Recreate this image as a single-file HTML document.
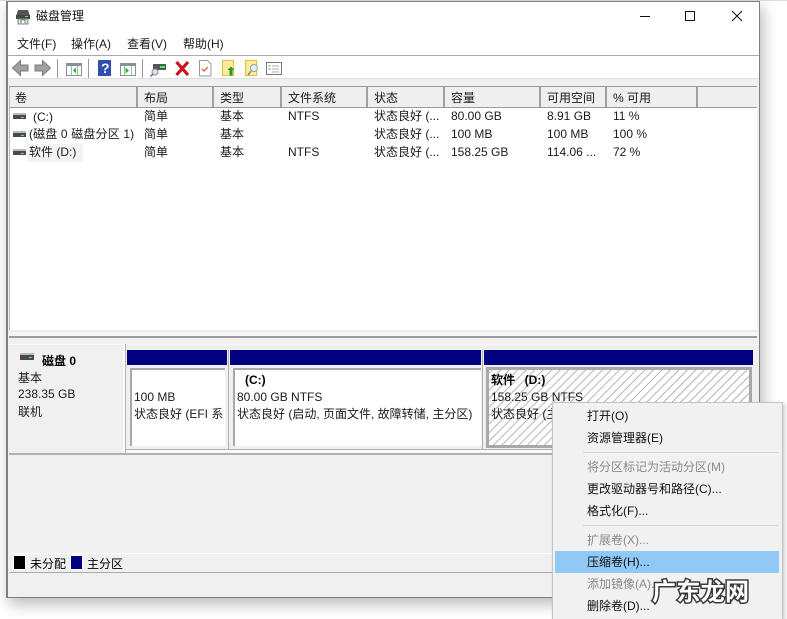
<!DOCTYPE html>
<html><head><meta charset="utf-8"><style>
html,body{margin:0;padding:0}
body{width:787px;height:619px;overflow:hidden;background:#fff;position:relative;font-family:"Liberation Sans","Noto Sans CJK SC",sans-serif;font-size:12px;color:#1a1a1a}
div,svg{position:absolute}
.t{white-space:nowrap;line-height:16px}
.h{top:87px;height:20px;background:#efefef;border-right:2px solid #a0a0a0;box-sizing:border-box}
.m{white-space:nowrap;line-height:16px;left:587px;color:#111}
.g{color:#8a8a8a}
</style></head><body>
<div style="left:0;top:0;width:787px;height:1px;background:#ddd"></div>
<div style="left:6px;top:1px;width:754px;height:597px;box-sizing:border-box;border:1px solid #808080;border-left-width:2px;background:#f0f0f0;box-shadow:3px 6px 14px rgba(0,0,0,.28)"></div>
<div style="left:8px;top:2px;width:751px;height:53px;background:#fff"></div>
<div style="left:8px;top:55px;width:751px;height:1px;background:#aaa"></div>
<div style="left:8px;top:56px;width:751px;height:22px;background:#fff"></div>
<div style="left:8px;top:78px;width:751px;height:1px;background:#ddd"></div>

<svg style="left:15px;top:9px" width="16" height="16" viewBox="0 0 16 16"><path d="M3 1h10l2 6H1z" fill="#555"/><rect x="1" y="6" width="14" height="4" fill="#444"/><rect x="10" y="7" width="3" height="1" fill="#3f3"/><path d="M3 10h10v5H3z" fill="#ddd" stroke="#888"/><rect x="6" y="11" width="4" height="4" fill="#fff" stroke="#888"/></svg>
<div class="t" style="left:36px;top:8px;font-size:12px;color:#111">磁盘管理</div>

<svg style="left:640px;top:9px" width="110" height="16" viewBox="0 0 110 16"><path d="M0 7.500h10" stroke="#111" fill="none"/><rect x="45.500" y="2.500" width="9" height="9" fill="none" stroke="#111"/><path d="M92 2l10 10M102 2l-10 10" stroke="#111" fill="none"/></svg>

<div class="t" style="left:17px;top:36px">文件(F)</div>
<div class="t" style="left:71px;top:36px">操作(A)</div>
<div class="t" style="left:127px;top:36px">查看(V)</div>
<div class="t" style="left:183px;top:36px">帮助(H)</div>

<svg style="left:0;top:56px" width="300" height="24" viewBox="0 0 300 24">
<path d="M12.500 12l8-7.500v4.500h7.500v6h-7.500v4.500z" fill="#a0a0a0" stroke="#7c7c7c"/>
<path d="M50.500 12l-8-7.500v4.500h-7.500v6h7.500v4.500z" fill="#a0a0a0" stroke="#7c7c7c"/>
<rect x="57" y="3" width="1" height="19" fill="#9a9a9a"/>
<rect x="66.500" y="7.500" width="15" height="12" fill="#fff" stroke="#8a9097"/><rect x="66" y="7" width="16" height="3" fill="#8a9097"/><path d="M71.500 10v9M77.500 10v9" stroke="#aab4bc"/><path d="M73 14.500l3-3v6z" fill="#2b2"/>
<rect x="88" y="3" width="1" height="19" fill="#9a9a9a"/>
<rect x="98" y="4" width="13" height="16" fill="#2c4fb0"/><text x="101" y="17" font-size="14" font-weight="bold" fill="#fff" font-family="Liberation Sans">?</text>
<rect x="120.500" y="7.500" width="15" height="12" fill="#fff" stroke="#8a9097"/><rect x="120" y="7" width="16" height="3" fill="#8a9097"/><path d="M124.500 10v9M131.500 10v9" stroke="#aab4bc"/><path d="M125.500 11.500l3.500 3-3.500 3z" fill="#2b2"/>
<rect x="142" y="3" width="1" height="19" fill="#9a9a9a"/>
<rect x="153" y="8" width="13" height="6" fill="#555"/><rect x="160" y="10" width="5" height="2" fill="#3f3"/><circle cx="155" cy="16" r="3" fill="#dde4ee" stroke="#889"/><path d="M153 18l-2.500 2.500" stroke="#666" stroke-width="1.500"/>
<path d="M176.500 6l11.500 13M188 6l-11.500 13" stroke="#c8141e" stroke-width="3.200"/>
<path d="M199.500 4.500h8l3.500 3.500v12h-11.500z" fill="#fff" stroke="#999"/><path d="M202 13l2 2 4-4" stroke="#e8622a" fill="none" stroke-width="1.300"/>
<rect x="222.500" y="4.500" width="11" height="15" fill="#fdeb9a" stroke="#e2bf3e"/><path d="M231 10.500l3.500 3.500h-2v5.500h-3v-5.500h-2z" fill="#1aa01a"/>
<rect x="245.500" y="4.500" width="11" height="15" fill="#fdeb9a" stroke="#e2bf3e"/><circle cx="254" cy="12" r="3.500" fill="#e4eef4" stroke="#8aa"/><path d="M251 15l-3 4" stroke="#888" stroke-width="1.500"/>
<rect x="266.500" y="6.500" width="15" height="12" fill="#fff" stroke="#778"/><path d="M272 10h7M272 13h7M272 16h7" stroke="#aab"/><path d="M268.500 10h2M268.500 13h2" stroke="#48c"/>
</svg>

<!-- list -->
<div style="left:9px;top:86px;width:748px;height:244px;background:#fff;border-top:1px solid #999;border-left:1px solid #bbb;box-sizing:border-box"></div>
<div class="h" style="left:10px;width:128px"></div>
<div class="h" style="left:138px;width:76px"></div>
<div class="h" style="left:214px;width:68px"></div>
<div class="h" style="left:282px;width:86px"></div>
<div class="h" style="left:368px;width:77px"></div>
<div class="h" style="left:445px;width:96px"></div>
<div class="h" style="left:541px;width:66px"></div>
<div class="h" style="left:607px;width:91px"></div>
<div class="h" style="left:698px;width:59px;border-right:0"></div>
<div style="left:10px;top:107px;width:747px;height:1px;background:#9a9a9a"></div>

<div class="t" style="left:15px;top:90px">卷</div>
<div class="t" style="left:144px;top:90px">布局</div>
<div class="t" style="left:220px;top:90px">类型</div>
<div class="t" style="left:288px;top:90px">文件系统</div>
<div class="t" style="left:374px;top:90px">状态</div>
<div class="t" style="left:451px;top:90px">容量</div>
<div class="t" style="left:547px;top:90px">可用空间</div>
<div class="t" style="left:613px;top:90px">% 可用</div>

<div style="left:27px;top:144px;width:56px;height:18px;background:#f3f3f3"></div>
<svg style="left:12px;top:112px" width="16" height="48" viewBox="0 0 16 48"><rect x="1" y="1" width="13" height="2" fill="#bbb"/><rect x="1" y="3" width="13" height="4" fill="#4a4a4a"/><rect x="9" y="5" width="3" height="1" fill="#4f4"/><rect x="1" y="19" width="13" height="2" fill="#bbb"/><rect x="1" y="21" width="13" height="4" fill="#4a4a4a"/><rect x="9" y="23" width="3" height="1" fill="#4f4"/><rect x="1" y="37" width="13" height="2" fill="#bbb"/><rect x="1" y="39" width="13" height="4" fill="#4a4a4a"/><rect x="9" y="41" width="3" height="1" fill="#4f4"/></svg>

<div class="t" style="left:33px;top:109px">(C:)</div>
<div class="t" style="left:29px;top:126px;letter-spacing:.15px">(磁盘 0 磁盘分区 1)</div>
<div class="t" style="left:29px;top:144px">软件 (D:)</div>

<div class="t" style="left:144px;top:108px">简单</div><div class="t" style="left:144px;top:126px">简单</div><div class="t" style="left:144px;top:144px">简单</div>
<div class="t" style="left:220px;top:108px">基本</div><div class="t" style="left:220px;top:126px">基本</div><div class="t" style="left:220px;top:144px">基本</div>
<div class="t" style="left:288px;top:108px">NTFS</div><div class="t" style="left:288px;top:144px">NTFS</div>
<div class="t" style="left:374px;top:108px">状态良好 (...</div><div class="t" style="left:374px;top:126px">状态良好 (...</div><div class="t" style="left:374px;top:144px">状态良好 (...</div>
<div class="t" style="left:451px;top:108px">80.00 GB</div><div class="t" style="left:451px;top:126px">100 MB</div><div class="t" style="left:451px;top:144px">158.25 GB</div>
<div class="t" style="left:547px;top:108px">8.91 GB</div><div class="t" style="left:547px;top:126px">100 MB</div><div class="t" style="left:547px;top:144px">114.06 ...</div>
<div class="t" style="left:613px;top:108px">11 %</div><div class="t" style="left:613px;top:126px">100 %</div><div class="t" style="left:613px;top:144px">72 %</div>

<!-- splitter -->
<div style="left:9px;top:330px;width:748px;height:2px;background:#ececec"></div>
<div style="left:9px;top:332px;width:748px;height:4px;background:#f6f6f6"></div>
<div style="left:9px;top:336px;width:748px;height:2px;background:#9c9c9c"></div>

<!-- disk panel -->
<div style="left:9px;top:344px;width:749px;height:1px;background:#fafafa"></div>
<div style="left:123px;top:344px;width:2px;height:110px;background:#fafafa"></div>
<div style="left:125px;top:344px;width:1px;height:110px;background:#b4b4b4"></div>
<div style="left:126px;top:449px;width:632px;height:1px;background:#b0b0b0"></div>
<div style="left:126px;top:450px;width:632px;height:3px;background:#f8f8f8"></div>
<div style="left:9px;top:453px;width:749px;height:2px;background:#b0b0b0"></div>
<svg style="left:19px;top:352px" width="16" height="12" viewBox="0 0 16 12"><rect x="1" y="1" width="14" height="2" fill="#bbb"/><rect x="1" y="3" width="14" height="5" fill="#4a4a4a"/><rect x="10" y="5" width="3" height="1" fill="#4f4"/></svg>
<div class="t" style="left:42px;top:353px;font-weight:bold;color:#000">磁盘 0</div>
<div class="t" style="left:18px;top:370px">基本</div>
<div class="t" style="left:18px;top:386px">238.35 GB</div>
<div class="t" style="left:18px;top:404px">联机</div>

<!-- partitions -->
<div style="left:127px;top:350px;width:100px;height:15px;background:#000080"></div>
<div style="left:230px;top:350px;width:251px;height:15px;background:#000080"></div>
<div style="left:484px;top:350px;width:269px;height:15px;background:#000080"></div>
<div style="left:228px;top:350px;width:1px;height:99px;background:#b0b0b0"></div>
<div style="left:482px;top:350px;width:1px;height:99px;background:#b0b0b0"></div>

<div style="left:130px;top:368px;width:95px;height:78px;background:#fff;border-left:2px solid #a8a8a8;border-top:2px solid #a8a8a8;box-sizing:border-box"></div>
<div style="left:233px;top:368px;width:248px;height:78px;background:#fff;border-left:2px solid #a8a8a8;border-top:2px solid #a8a8a8;box-sizing:border-box"></div>
<svg style="left:486px;top:367px" width="266" height="81" viewBox="0 0 266 81"><defs><pattern id="p" width="6" height="6" patternUnits="userSpaceOnUse" patternTransform="rotate(45)"><rect width="6" height="6" fill="#fff"/><rect width="1" height="6" fill="#b4b4b4"/></pattern></defs><rect x="1.500" y="1.500" width="263" height="78" fill="url(#p)" stroke="#a8a8a8" stroke-width="3"/></svg>

<div class="t" style="left:134px;top:389px">100 MB</div>
<div class="t" style="left:134px;top:406px">状态良好 (EFI 系</div>
<div class="t" style="left:245px;top:372px;font-weight:bold;color:#000">(C:)</div>
<div class="t" style="left:237px;top:389px">80.00 GB NTFS</div>
<div class="t" style="left:237px;top:406px">状态良好 (启动, 页面文件, 故障转储, 主分区)</div>
<div class="t" style="left:491px;top:372px;font-weight:bold;color:#000">软件&nbsp;&nbsp;<span style="margin-left:3px">(D:)</span></div>
<div class="t" style="left:491px;top:389px">158.25 GB NTFS</div>
<div class="t" style="left:491px;top:406px">状态良好 (主</div>

<!-- legend -->
<div style="left:9px;top:553px;width:749px;height:1px;background:#fff"></div>
<div style="left:9px;top:572px;width:749px;height:1px;background:#aaa"></div>
<div style="left:13px;top:555px;width:13px;height:15px;background:#000;border:1px solid #fff;box-sizing:border-box"></div>
<div style="left:70px;top:555px;width:13px;height:15px;background:#000080;border:1px solid #fff;box-sizing:border-box"></div>
<div class="t" style="left:30px;top:556px;color:#000">未分配</div>
<div class="t" style="left:87px;top:556px;color:#000">主分区</div>

<!-- context menu -->
<div style="left:552px;top:402px;width:231px;height:217px;background:#f1f1f1;border:1px solid #c4c4c4;border-bottom:0;box-sizing:border-box;box-shadow:2px 2px 4px rgba(0,0,0,.2)"></div>
<div style="left:583px;top:452px;width:195px;height:1px;background:#d6d6d6"></div>
<div style="left:583px;top:525px;width:195px;height:1px;background:#d6d6d6"></div>
<div style="left:555px;top:551px;width:224px;height:22px;background:#90c8f6"></div>
<div class="m" style="top:408px">打开(O)</div>
<div class="m" style="top:430px">资源管理器(E)</div>
<div class="m g" style="top:459px">将分区标记为活动分区(M)</div>
<div class="m" style="top:481px">更改驱动器号和路径(C)...</div>
<div class="m" style="top:503px">格式化(F)...</div>
<div class="m g" style="top:532px">扩展卷(X)...</div>
<div class="m" style="top:554px">压缩卷(H)...</div>
<div class="m g" style="top:576px">添加镜像(A)...</div>
<div class="m" style="top:598px">删除卷(D)...</div>

<svg style="left:650px;top:572px" width="105" height="36" viewBox="0 0 105 36"><text x="2" y="28" font-size="24" font-weight="bold" fill="#fff" stroke="#3a3a3a" stroke-width="3" paint-order="stroke" font-family="'Noto Sans CJK SC',sans-serif" textLength="97" lengthAdjust="spacing">广东龙网</text></svg>
</body></html>
